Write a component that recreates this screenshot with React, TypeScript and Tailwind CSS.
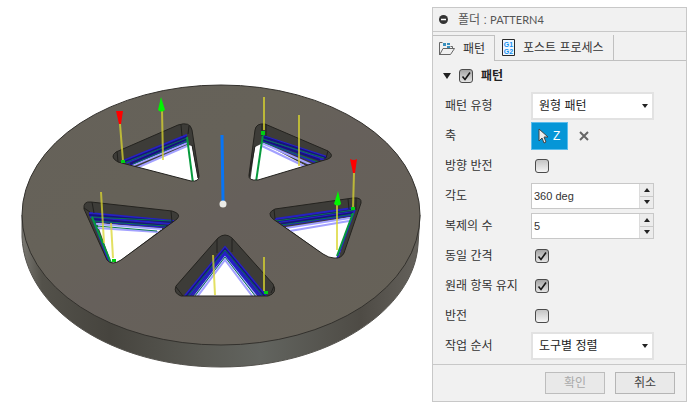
import { useState } from "react";
import type { ReactNode } from "react";

type Pocket = {
  id: string;
  outline: string;
  creases: string;
  hole: string;
  haze: string;
  blue: string;
  navy: string;
  green: string;
  edge: string;
};

const pockets: Pocket[] = [
  {
    id: "upper-left",
    outline: "M116 152L178 125Q190 121 192 130L199 176Q199 182 191 181L118 162Q109 157 116 152Z",
    creases: "M117 151L118 162M181 125L182 136M188 134L189 126M192 145L198 178",
    hole: "M134 169L188 145L192 146L199 184Z",
    haze: "M134 169L187 146M129 167L187 143",
    blue: "M123 161L187 135M126 163L187 138M129 165L187 141",
    navy: "M122 163L187 137M130 164L187 139",
    green: "M124 163L187 138M133 164L187 141",
    edge: "M187 137L193 183",
  },
  {
    id: "upper-right",
    outline: "M255 130Q256 123 265 124L328 151Q335 156 328 159L258 180Q248 181 249 175Z",
    creases: "M262 124L262 136M266 124L266 136M328 151L326 158M255 146L249 177",
    hole: "M255 147L263 143L308 167L250 183Z",
    haze: "M262 146L306 167M262 143L312 165",
    blue: "M263 136L327 157M263 139L324 160M263 141L317 163",
    navy: "M263 137L326 158M263 140L320 160",
    green: "M263 139L324 158M263 142L318 162",
    edge: "M263 134L256 182",
  },
  {
    id: "left",
    outline: "M84 209Q83 201 91 202L172 211Q182 214 177 219L121 260Q112 266 107 260Z",
    creases: "M92 202L94 213M171 211L172 222M90 212L84 208",
    hole: "M97 223L162 229L116 264L111 262Z",
    haze: "M96 224L162 229M97 228L158 232",
    blue: "M89 213L174 221M90 217L172 224M93 221L166 227M91 214L109 262",
    navy: "M89 215L173 222M92 219L168 226",
    green: "M91 217L172 221M93 221L166 226M97 226L157 231",
    edge: "M92 217L111 263",
  },
  {
    id: "bottom",
    outline: "M218 238Q225 232 232 238L273 284Q278 293 268 296L181 296Q173 293 176 286Z",
    creases: "M217 239L217 253M232 239L232 252M176 287L183 296M271 293L274 286",
    hole: "M225 256L256 297L194 297Z",
    haze: "M194 297L225 256L257 297M197 297L225 260L253 297",
    blue: "M184 297L225 247L267 297M188 297L225 251L263 297M191 297L225 254L260 297",
    navy: "M186 297L225 249L265 297",
    green: "M187 297L225 250L264 297M194 297L225 257L256 297",
    edge: "",
  },
  {
    id: "right",
    outline: "M275 209L353 198Q362 197 361 203L344 253Q341 259 334 258Q329 258 323 254L273 219Q266 213 275 209Z",
    creases: "M274 209L275 219M348 199L349 209M356 198L356 210",
    hole: "M287 228L351 217L338 259L328 258Z",
    haze: "M286 228L350 218M290 231L349 221",
    blue: "M275 219L353 208M279 222L353 212M283 225L352 215M355 209L337 259",
    navy: "M277 221L353 210M281 224L353 213",
    green: "M276 221L354 210M281 225L354 214",
    edge: "M353 213L337 256",
  },
];

function Model() {
  return (
    <svg viewBox="0 0 432 410" className="min-w-0 flex-1" role="img" aria-label="PATTERN4">
      <defs>
        <linearGradient id="top" x1="0" y1="0" x2="1" y2="1">
          <stop offset="0" stopColor="#656159" />
          <stop offset=".35" stopColor="#666259" />
          <stop offset=".5" stopColor="#66605b" />
          <stop offset="1" stopColor="#666257" />
        </linearGradient>
        <linearGradient id="side">
          <stop offset="0" stopColor="#7a7872" />
          <stop offset=".05" stopColor="#53514a" />
          <stop offset=".22" stopColor="#46443e" />
          <stop offset=".45" stopColor="#595953" />
          <stop offset=".6" stopColor="#62645f" />
          <stop offset=".85" stopColor="#4e4b45" />
          <stop offset="1" stopColor="#65625c" />
        </linearGradient>
        {pockets.map((p) => (
          <clipPath key={p.id} id={p.id}>
            <path d={p.outline} />
          </clipPath>
        ))}
      </defs>

      <path
        d="M22 215V237C25 309 112 367 221 367C330 367 414 309 418 245L420 215Z"
        fill="url(#side)"
        stroke="#55534e"
        strokeWidth="1"
      />
      <ellipse cx="221" cy="215" rx="199" ry="130" fill="url(#top)" stroke="#33312d" strokeWidth="1" />

      {pockets.map((p) => (
        <g key={p.id} fill="none">
          <path d={p.outline} fill="#3d3c38" />
          <g clipPath={`url(#${p.id})`}>
            <path d={p.hole} fill="#fff" />
            <path d={p.haze} stroke="#a3a1ff" strokeWidth="2" />
            <path d={p.blue} stroke="#2620c5" strokeWidth="2" />
            <path d={p.navy} stroke="#17117f" strokeWidth="2" />
            <path d={p.green} stroke="#0b764f" strokeWidth="1" />
            <path d={p.edge} stroke="#079a3d" strokeWidth="2" />
            <path d={p.creases} stroke="#22211e" strokeWidth="1" />
          </g>
          <path d={p.outline} stroke="#24231f" strokeWidth="1" />
        </g>
      ))}

      {/* lead-in and retract moves */}
      <path
        d="M120 124L123 161M162 110L163 160M264 97V130M299 115V166M101 192L104 243M111 223L113 258M213 255L215 295M264 257V291M337 204V250M354 173L353 208"
        fill="none"
        stroke="#d9d52e"
        strokeOpacity=".75"
        strokeWidth="2"
      />
      <path
        d="M121 160h4v3h-4zM261 131h4v4h-4zM112 259h4v3h-4zM264 291h4v3h-4zM351 207h4v3h-4z"
        fill="#00cf13"
      />
      <path d="M116 111h7l-2 13h-2zM350 159q4 2 7 0l-2 14h-2z" fill="#f00" />
      <path d="M161 97l4 13q-4 3-7 0zM338 191l3 13q-3 3-7 0z" fill="#00f500" />
      <path d="M222 135L223 201" stroke="#0875f5" strokeWidth="3" />
      <circle cx="223" cy="204" r="3.5" fill="#ebebe7" />
    </svg>
  );
}

function Caret({ up = false }: { up?: boolean }) {
  return (
    <svg viewBox="0 0 6 4" className="h-1 w-1.5" aria-hidden="true">
      <path d={up ? "M0 4L3 0L6 4Z" : "M0 0H6L3 4Z"} fill="#222" />
    </svg>
  );
}

function Check({ id, initial = false }: { id: string; initial?: boolean }) {
  const [checked, setChecked] = useState(initial);

  return (
    <span className="relative grid size-3.5 place-items-center">
      <input
        id={id}
        type="checkbox"
        checked={checked}
        onChange={(e) => setChecked(e.target.checked)}
        className="size-3.5 appearance-none rounded-[3px] border border-[#4b4b4b] bg-linear-to-b from-[#c4c4c4] to-[#f4f4f4] checked:from-[#a5a5a5] checked:to-[#e5e5e5]"
      />
      {checked && (
        <svg viewBox="0 0 14 14" className="pointer-events-none absolute inset-0 size-3.5">
          <path d="M3.5 7.5L6 10.5L11 3.5" fill="none" stroke="#171717" strokeWidth="1.6" />
        </svg>
      )}
    </span>
  );
}

function Row({ id, label, children }: { id: string; label: string; children: ReactNode }) {
  return (
    <div className="flex h-[30px] items-center">
      <label htmlFor={id} className="w-[86px] shrink-0">
        {label}
      </label>
      {children}
    </div>
  );
}

function Dropdown({ id, options }: { id: string; options: string[] }) {
  return (
    <div className="relative w-[123px]">
      <select
        id={id}
        className="block h-7 w-full appearance-none border-2 border-[#e2e2e2] bg-white pr-5 pl-1.5 text-[#222]"
      >
        {options.map((o) => (
          <option key={o}>{o}</option>
        ))}
      </select>
      <span className="pointer-events-none absolute inset-y-0 right-1.5 flex items-center">
        <Caret />
      </span>
    </div>
  );
}

function Stepper({ id, initial, unit = "", step = 1 }: { id: string; initial: number; unit?: string; step?: number }) {
  const [text, setText] = useState(`${initial}${unit}`);

  function bump(by: number) {
    setText(`${(parseFloat(text) || 0) + by}${unit}`);
  }

  return (
    <div className="flex h-[26px] w-[123px] border border-[#c8c8c8] bg-white">
      <input
        id={id}
        value={text}
        onChange={(e) => setText(e.target.value)}
        className="min-w-0 flex-1 px-0.5 font-['Liberation_Sans',sans-serif] text-[11px] text-[#333] outline-none"
      />
      <div className="flex w-3.5 flex-col divide-y divide-[#c8c8c8] border-l border-[#dcdcdc] bg-[#ececec]">
        <button aria-label="+" onClick={() => bump(step)} className="grid flex-1 place-items-center">
          <Caret up />
        </button>
        <button aria-label="-" onClick={() => bump(-step)} className="grid flex-1 place-items-center">
          <Caret />
        </button>
      </div>
    </div>
  );
}

function FolderIcon() {
  return (
    <svg viewBox="0 0 16 14" className="h-3.5 w-4" fill="none" aria-hidden="true">
      <path d="M3.5 .5H.5V13M.5 13L4 6.5H15.5L11.5 12.5H.5M11.5 4.5H13.5V6" stroke="#666" />
      <path d="M4 1h3v3H4zM8 1h3v2H8zM8 4h3v2H8z" fill="#398fbd" />
    </svg>
  );
}

function PostIcon() {
  return (
    <svg viewBox="0 0 13 17" className="h-[17px] w-[13px]" aria-hidden="true">
      <path d="M.5 .5H12.5V16.5H.5Z" fill="#eef7ff" stroke="#292929" />
      <text x="6.5" y="8" textAnchor="middle" fontFamily="Liberation Sans" fontSize="7" fontWeight="700" fill="#168ff0">
        G1
      </text>
      <text x="6.5" y="15" textAnchor="middle" fontFamily="Liberation Sans" fontSize="7" fontWeight="700" fill="#168ff0">
        G2
      </text>
    </svg>
  );
}

function PatternDialog() {
  const [axis, setAxis] = useState("Z");

  return (
    <section className="mt-[7px] mr-2 w-[255px] shrink-0 border border-[#c8c8c8] bg-[#f1f1f1] text-xs leading-4 text-[#333]">
      <header className="flex h-6 items-center gap-2.5 border-b border-[#c8c8c8] px-1.5">
        <svg viewBox="0 0 9 9" className="size-[9px]" aria-hidden="true">
          <circle cx="4.5" cy="4.5" r="4.5" fill="#333" />
          <path d="M2 4.5H7" stroke="#fff" strokeWidth="1.5" />
        </svg>
        <h1 className="text-[#555]">
          폴더 : <span className="font-[Lato,sans-serif] text-[11px]">PATTERN4</span>
        </h1>
      </header>

      <div role="tablist" className="mt-[3px] flex h-[26px]">
        <button
          role="tab"
          aria-selected="true"
          className="flex w-[62px] items-center gap-2 border-t border-r border-[#c0c0c0] pl-1.5"
        >
          <FolderIcon />
          패턴
        </button>
        <div className="flex flex-1 border-b border-[#c0c0c0]">
          <button
            role="tab"
            aria-selected="false"
            className="flex w-[119px] items-center gap-2 border-r border-[#c0c0c0] pl-[7px]"
          >
            <PostIcon />
            포스트 프로세스
          </button>
        </div>
      </div>

      <div className="flex h-[30px] items-center gap-2 pl-2.5">
        <svg viewBox="0 0 8 6" className="h-1.5 w-2" aria-hidden="true">
          <path d="M0 0H8L4 6Z" fill="#222" />
        </svg>
        <Check id="pattern" initial />
        <label htmlFor="pattern" className="font-bold text-[#222]">
          패턴
        </label>
      </div>

      <div className="border-b border-[#c8c8c8] pb-[3px] pl-3">
        <Row id="type" label="패턴 유형">
          <Dropdown id="type" options={["원형 패턴"]} />
        </Row>
        <Row id="axis" label="축">
          <button
            id="axis"
            onClick={() => setAxis("Z")}
            className="flex h-7 w-[37px] items-center gap-1 border border-[#5bbcec] bg-[#0696d7] pl-1.5 text-white"
          >
            <svg viewBox="0 0 11 16" className="h-4 w-[11px]" aria-hidden="true">
              <path d="M1 1V13L4 10L6 15L8 14L6 9H10Z" fill="#eee" stroke="#444" />
            </svg>
            {axis}
          </button>
          <button aria-label="축 선택 취소" onClick={() => setAxis("")} className="ml-2.5 grid size-3 place-items-center">
            <svg viewBox="0 0 10 10" className="size-2.5">
              <path d="M1 1L9 9M9 1L1 9" stroke="#666" strokeWidth="2" />
            </svg>
          </button>
        </Row>
        <Row id="reverse" label="방향 반전">
          <span className="pl-1">
            <Check id="reverse" />
          </span>
        </Row>
        <Row id="angle" label="각도">
          <Stepper id="angle" initial={360} unit=" deg" step={5} />
        </Row>
        <Row id="count" label="복제의 수">
          <Stepper id="count" initial={5} />
        </Row>
        <Row id="spacing" label="동일 간격">
          <span className="pl-1">
            <Check id="spacing" initial />
          </span>
        </Row>
        <Row id="keep" label="원래 항목 유지">
          <span className="pl-1">
            <Check id="keep" initial />
          </span>
        </Row>
        <Row id="invert" label="반전">
          <span className="pl-1">
            <Check id="invert" />
          </span>
        </Row>
        <Row id="order" label="작업 순서">
          <Dropdown id="order" options={["도구별 정렬"]} />
        </Row>
      </div>

      <footer className="flex justify-end gap-2.5 px-[11px] py-[7px]">
        <button disabled className="h-[22px] w-[60px] border border-[#bdbdbd] bg-[#e9e9e9] text-[#aaa]">
          확인
        </button>
        <button className="h-[22px] w-[60px] border border-[#b5b5b5] bg-[#e9e9e9] text-[#444]">취소</button>
      </footer>
    </section>
  );
}

function App() {
  return (
    <main className="flex items-start bg-white font-['Liberation_Sans','Noto_Sans_CJK_KR',sans-serif]">
      <Model />
      <PatternDialog />
    </main>
  );
}

export default App;
